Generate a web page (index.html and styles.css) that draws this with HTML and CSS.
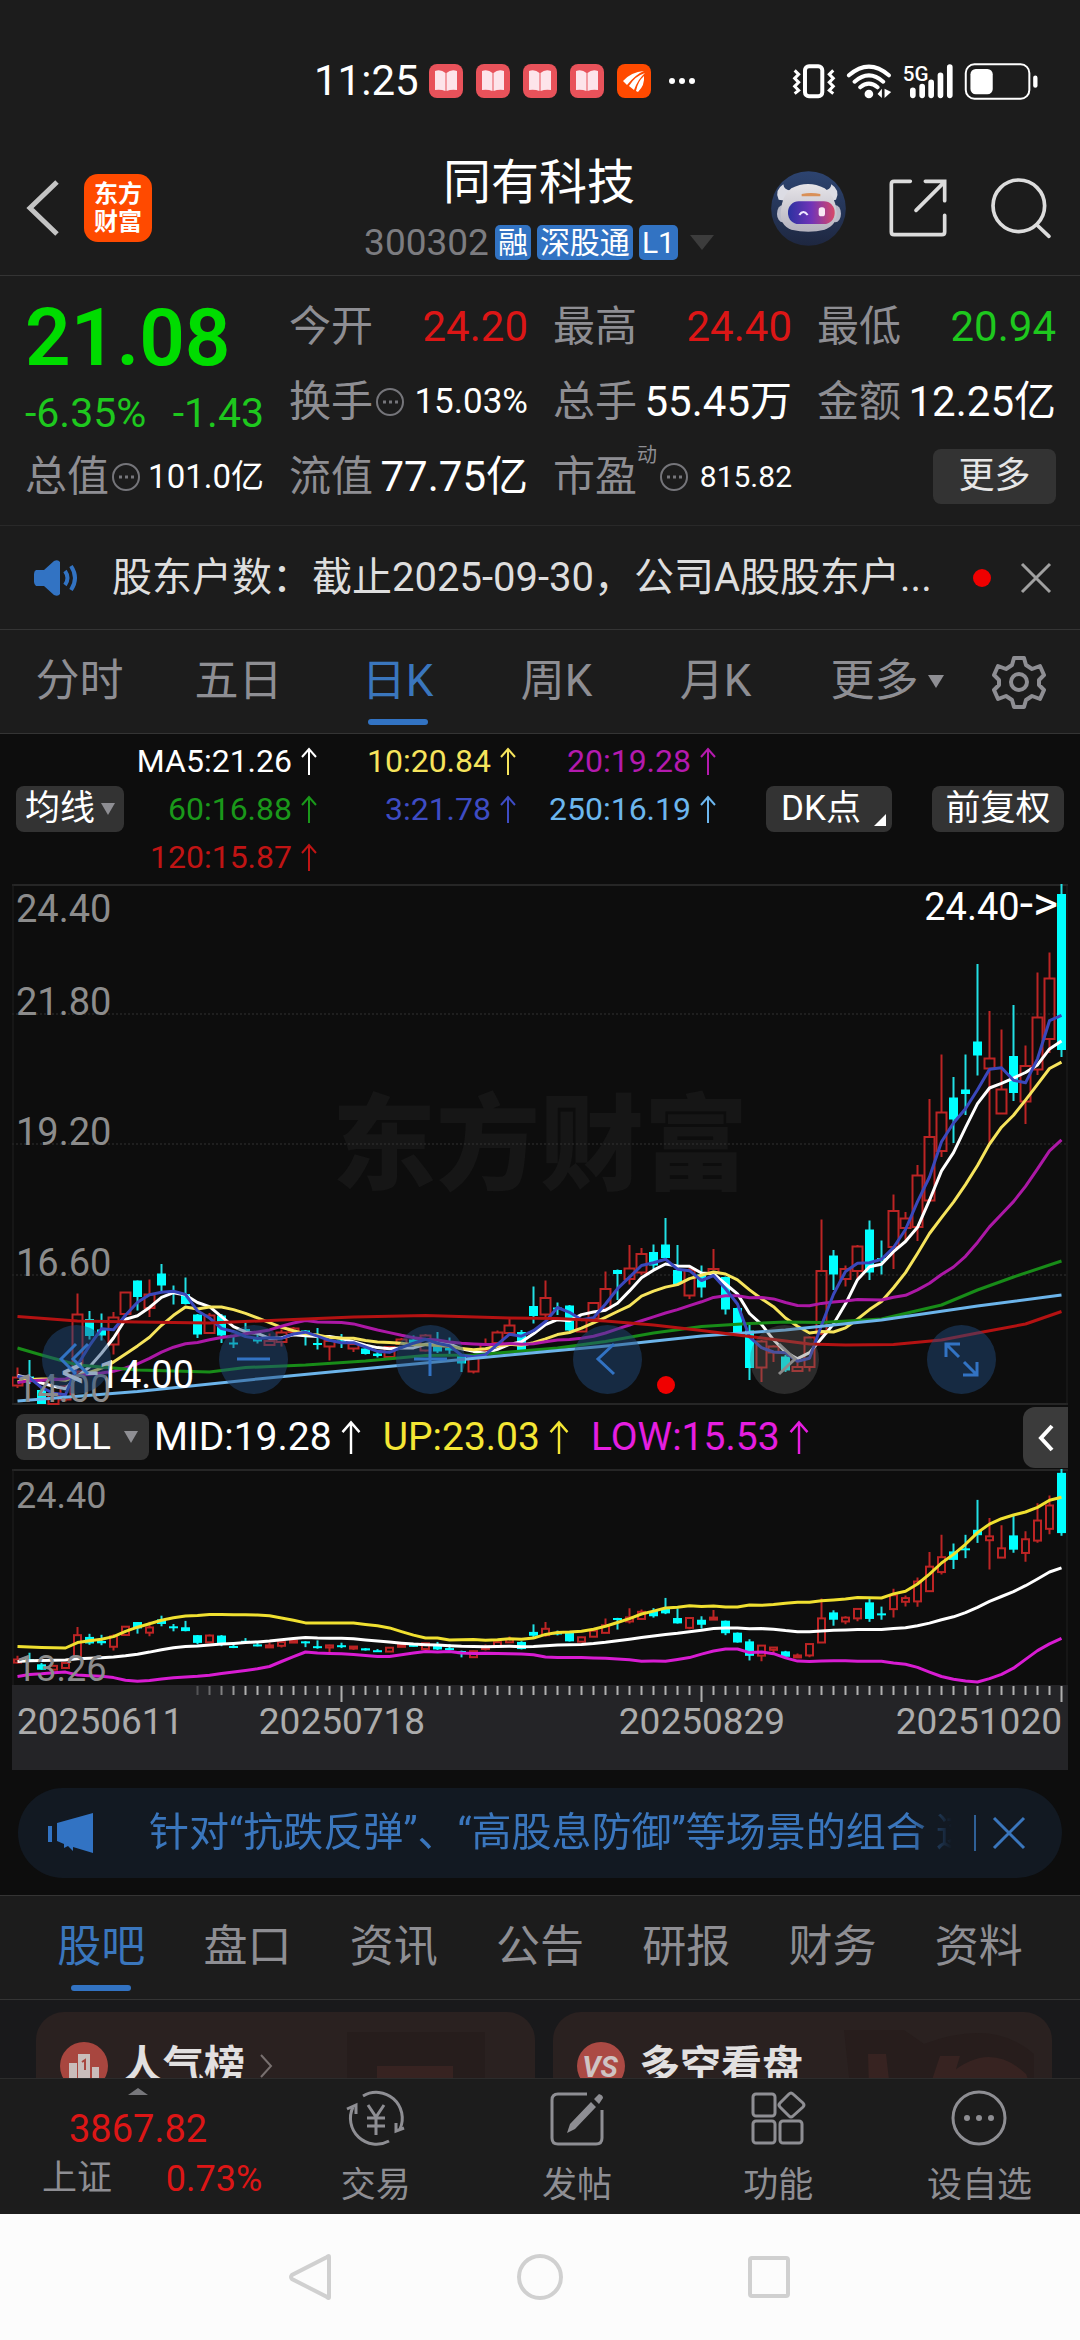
FILE: index.html
```html
<!DOCTYPE html>
<html lang="zh-CN">
<head>
<meta charset="utf-8">
<meta name="viewport" content="width=device-width, initial-scale=1">
<title>同有科技 300302</title>
<link rel="stylesheet" href="styles.css">
</head>
<body>
<svg class="symbols" aria-hidden="true">
  <symbol id="arrow" viewBox="0 0 16 28"><path d="M8 28V2M1 10l7-8 7 8" fill="none" stroke="currentColor" stroke-width="2"/></symbol>
  <symbol id="book" viewBox="0 0 34 34"><rect width="34" height="34" rx="8" fill="#e8525a"/><path d="M6 7q6-2 10.500 2v18q-5-2-10.500-1zM28 7q-6-2-10.500 2v18q5-2 10.500-1z" fill="#fde4ea"/></symbol>
</svg>
<div class="app">
  <div class="status">
    <span class="status-time">11:25</span>
    <svg class="status-app"><use href="#book"/></svg>
    <svg class="status-app"><use href="#book"/></svg>
    <svg class="status-app"><use href="#book"/></svg>
    <svg class="status-app"><use href="#book"/></svg>
    <svg class="status-app" viewBox="0 0 34 34"><rect width="34" height="34" rx="8" fill="#ff4a00"/><path d="M6 17Q14 8 27 7q-8 3-17 14zM12 22Q18 12 28 9q-7 6-11 17zM19 27q2-10 8-15 1 9-6 16z" fill="#fff"/></svg>
    <svg class="status-dots" viewBox="0 0 28 8"><circle cx="4" cy="4" r="3" fill="#fff"/><circle cx="14" cy="4" r="3" fill="#fff"/><circle cx="24" cy="4" r="3" fill="#fff"/></svg>
    <svg class="status-system" viewBox="210 30 745 120" fill="none" stroke="#fff">
      <rect x="249" y="46" width="52" height="90" rx="12" stroke-width="12"/>
      <path d="M218 58l12 12-12 12 12 12-12 12 12 12-12 10M334 58l-12 12 12 12-12 12 12 12-12 12 12 10" stroke-width="9"/>
      <path d="M381 73q60-52 120 0M398 92q43-38 86 0M415 109q26-22 52 0" stroke-width="12" stroke-linecap="round"/>
      <circle cx="441" cy="129" r="13" fill="#fff" stroke="none"/>
      <path d="M480 113v28l-13-12zM488 113v28l20-18z" fill="#fff" stroke="none"/>
      <text x="543" y="89" font-size="62" font-weight="500" fill="#fff" stroke="none">5G</text>
      <path d="M573 118v15M601 107v26M628 94v39M656 73v60M684 48v85" stroke-width="17" stroke-linecap="round"/>
      <rect x="732" y="40" width="191" height="103" rx="26" stroke-width="6"/>
      <rect x="746" y="54" width="67" height="76" rx="16" fill="#fff" stroke="none"/>
      <path d="M941 80v24" stroke-width="13" stroke-linecap="round"/>
    </svg>
  </div>

  <header class="header">
    <div class="header-left">
      <button class="plain" aria-label="返回"><svg width="34" height="56" viewBox="0 0 34 56"><path d="M31 2L4 28l27 26" fill="none" stroke="#c4c4c4" stroke-width="5"/></svg></button>
      <a class="brand" href="#">东方<br>财富</a>
    </div>
    <div class="header-title">
      <h1>同有科技</h1>
      <div class="code-row"><span class="code">300302</span><span class="badge">融</span><span class="badge">深股通</span><span class="badge">L1</span><svg width="24" height="15" viewBox="0 0 24 15"><path d="M0 0h24L12 15z" fill="#3c3c3c"/></svg></div>
    </div>
    <div class="header-right">
      <button class="plain" aria-label="智能助手"><svg width="75" height="75" viewBox="153 362 225 225">
        <defs>
          <linearGradient id="sky" x2="0" y2="1"><stop stop-color="#2d4470"/><stop offset="1" stop-color="#1e2740"/></linearGradient>
          <linearGradient id="visor"><stop stop-color="#2b32a0"/><stop offset=".5" stop-color="#7034b8"/><stop offset="1" stop-color="#d84868"/></linearGradient>
          <linearGradient id="shell" x2="0" y2="1"><stop stop-color="#e6e4e8"/><stop offset="1" stop-color="#b4b2be"/></linearGradient>
        </defs>
        <circle cx="265.500" cy="474.500" r="112" fill="url(#sky)"/>
        <path d="M190 402q-28 18-14 46l26 4 16-32q-26 2-28-18zM334 402q28 18 14 46l-26 4-16-32q26 2 28-18z" fill="#dcdce4"/>
        <ellipse cx="188" cy="490" rx="17" ry="26" fill="#b9bac8"/><ellipse cx="346" cy="490" rx="17" ry="26" fill="#b9bac8"/>
        <path d="M214 414q50-26 100 0q32 20 36 72q2 38-36 52q-48 12-100 0q-34-12-32-52q4-52 32-72z" fill="url(#shell)"/>
        <path d="M245 431q28-6 56 0v7h-56z" fill="#d99058"/>
        <rect x="204" y="453" width="140" height="68" rx="32" fill="url(#visor)"/>
        <path d="M238 494q12-18 25 0" fill="none" stroke="#f0e8ff" stroke-width="6"/><rect x="296" y="471" width="19" height="27" rx="8" fill="#f8e8f4"/>
      </svg></button>
      <button class="plain" aria-label="分享"><svg width="60" height="60" viewBox="500 385 180 180" fill="none" stroke="#dcdcdc" stroke-width="11" stroke-linecap="round"><path d="M567 395h-49q-8 0-8 8v144q0 8 8 8h144q8 0 8-8v-50M612 395h58v58M668 398l-84 84"/></svg></button>
      <button class="plain" aria-label="搜索"><svg width="62" height="62" viewBox="810 380 185 185" fill="none" stroke="#dcdcdc" stroke-width="11" stroke-linecap="round"><circle cx="896" cy="466" r="77"/><path d="M951 524l35 33"/></svg></button>
    </div>
  </header>

  <main class="main">
    <section class="quote">
      <div class="price"><strong>21.08</strong><div class="change"><span>-6.35%</span><span>-1.43</span></div></div>
      <div class="cell"><span class="label">今开</span><span class="value up">24.20</span></div>
      <div class="cell"><span class="label">最高</span><span class="value up">24.40</span></div>
      <div class="cell"><span class="label">最低</span><span class="value down">20.94</span></div>
      <div class="cell"><span class="label">换手</span><svg class="info" viewBox="0 0 30 30"><circle cx="15" cy="15" r="13"/><path d="M8 15h3M14 15h3M20 15h3"/></svg><span class="value mid">15.03%</span></div>
      <div class="cell"><span class="label">总手</span><span class="value">55.45万</span></div>
      <div class="cell"><span class="label">金额</span><span class="value">12.25亿</span></div>
      <div class="cell"><span class="label">总值</span><svg class="info" viewBox="0 0 30 30"><circle cx="15" cy="15" r="13"/><path d="M8 15h3M14 15h3M20 15h3"/></svg><span class="value small">101.0亿</span></div>
      <div class="cell"><span class="label">流值</span><span class="value">77.75亿</span></div>
      <div class="cell"><span class="label">市盈<sup>动</sup></span><svg class="info" viewBox="0 0 30 30"><circle cx="15" cy="15" r="13"/><path d="M8 15h3M14 15h3M20 15h3"/></svg><span class="value tiny">815.82</span></div>
      <div class="cell"><button class="more">更多</button></div>
    </section>

    <section class="notice">
      <svg width="46" height="36" viewBox="0 0 46 36"><path d="M2 10h8L20 1q4-2 6 1v32q-2 3-6 1l-10-9H2q-2-2-2-4v-8q0-3 2-4z" fill="#3273c3"/><path d="M31 11q5 7 0 14M37 6q8 12 0 24" fill="none" stroke="#3273c3" stroke-width="4"/></svg>
      <a class="notice-text" href="#">股东户数：截止2025-09-30，公司A股股东户...</a>
      <i class="dot"></i>
      <button class="plain" aria-label="关闭"><svg width="32" height="32" viewBox="0 0 32 32"><path d="M2 2l28 28M30 2L2 30" stroke="#a0a0a0" stroke-width="3"/></svg></button>
    </section>

    <nav class="tabs periods">
      <button>分时</button><button>五日</button><button class="active">日K</button><button>周K</button><button>月K</button>
      <button class="tab-more">更多<svg width="16" height="13" viewBox="0 0 16 13"><path d="M0 0h16L8 13z" fill="#8e8e93"/></svg></button>
      <button class="tab-gear" aria-label="设置"><svg width="54" height="54" viewBox="0 0 54 54" fill="none" stroke="#8e8e93" stroke-width="4" stroke-linejoin="round"><path d="M22 3h10l2 7 6 4 8-3 4 9-5 5v5l5 5-4 9-8-3-6 4-2 7H22l-2-7-6-4-8 3-4-9 5-5v-5l-5-5 4-9 8 3 6-4z"/><circle cx="27" cy="27" r="8"/></svg></button>
    </nav>

    <section class="chart-area">
      <div class="ma-bar">
        <button class="chip">均线<svg width="14" height="12" viewBox="0 0 14 12"><path d="M0 0h14L7 12z" fill="#8e8e93"/></svg></button>
        <div class="ma-grid">
          <span class="c-white">MA5:21.26<svg class="rise"><use href="#arrow"/></svg></span><span class="c-yellow">10:20.84<svg class="rise"><use href="#arrow"/></svg></span><span class="c-purple">20:19.28<svg class="rise"><use href="#arrow"/></svg></span>
          <span class="c-green">60:16.88<svg class="rise"><use href="#arrow"/></svg></span><span class="c-blue">3:21.78<svg class="rise"><use href="#arrow"/></svg></span><span class="c-sky">250:16.19<svg class="rise"><use href="#arrow"/></svg></span>
          <span class="c-red">120:15.87<svg class="rise"><use href="#arrow"/></svg></span>
        </div>
        <button class="chip chip-dk">DK点<svg width="12" height="12" viewBox="0 0 12 12"><path d="M12 0v12H0z" fill="#fff"/></svg></button>
        <button class="chip chip-adjust">前复权</button>
      </div>

      <div class="kline">
        <svg id="kline" viewBox="0 0 1056 521"></svg>
        <div class="tools">
          <button aria-label="更早"><svg viewBox="0 0 69 69"><path d="M34 19L19 34l15 15M46 19L31 34l15 15"/></svg></button>
          <button aria-label="缩小"><svg viewBox="0 0 69 69"><path d="M18 34h33"/></svg></button>
          <button aria-label="放大"><svg viewBox="0 0 69 69"><path d="M18 34h33M34 18v33"/></svg></button>
          <button aria-label="左移"><svg viewBox="0 0 69 69"><path d="M41 19L25 34l16 15"/></svg></button>
          <button class="off" aria-label="右移"><svg viewBox="0 0 69 69"><path d="M29 19l16 15-16 15"/></svg></button>
          <button aria-label="全屏"><svg viewBox="0 0 69 69"><path d="M19 32V19h14M20 20l12 12M50 37v13H36M49 49L37 37"/></svg></button>
        </div>
        <i class="dot kline-dot"></i>
      </div>

      <div class="boll-bar">
        <button class="chip chip-boll">BOLL<svg width="14" height="12" viewBox="0 0 14 12"><path d="M0 0h14L7 12z" fill="#8e8e93"/></svg></button>
        <span class="c-white">MID:19.28<svg class="rise"><use href="#arrow"/></svg></span><span class="c-up">UP:23.03<svg class="rise"><use href="#arrow"/></svg></span><span class="c-low">LOW:15.53<svg class="rise"><use href="#arrow"/></svg></span>
        <button class="drawer" aria-label="展开"><svg width="18" height="28" viewBox="0 0 18 28"><path d="M15 2L4 14l11 12" fill="none" stroke="#fff" stroke-width="4"/></svg></button>
      </div>
      <svg id="boll" viewBox="0 0 1056 216"></svg>
      <svg id="axis" viewBox="0 0 1056 85"></svg>

      <div class="banner">
        <svg width="46" height="40" viewBox="0 0 46 40"><path d="M0 13h4v16H0zM9 10L45 0v40l-20-6v4l-5-5-4 2v-4l-7-3z" fill="#3273c3"/></svg>
        <a class="banner-text" href="#">针对“抗跌反弹”、“高股息防御”等场景的组合 这</a>
        <i class="banner-line"></i>
        <button class="plain" aria-label="关闭"><svg width="34" height="34" viewBox="0 0 34 34"><path d="M2 2l30 30M32 2L2 32" stroke="#3a76bd" stroke-width="3"/></svg></button>
      </div>
    </section>

    <nav class="tabs sections">
      <button class="active">股吧</button><button>盘口</button><button>资讯</button><button>公告</button><button>研报</button><button>财务</button><button>资料</button>
    </nav>

    <section class="cards">
      <a class="card" href="#">
        <svg class="card-art" viewBox="0 0 200 110"><path d="M20 20h138v90H20z" fill="#261d1c"/><path d="M50 54h76v56H50z" fill="#372321"/></svg>
        <svg width="48" height="48" viewBox="0 0 48 48"><circle cx="24" cy="24" r="24" fill="#a8463f"/><path d="M9 21h8v20H9zM18 12h12v29H18zM32 25h7v16h-7z" fill="#c9bdbb"/><path d="M22 20l3-2v10" stroke="#a8463f" stroke-width="2" fill="none"/></svg>
        <h2>人气榜</h2>
        <svg width="14" height="24" viewBox="0 0 14 24"><path d="M2 1l10 11L2 23" fill="none" stroke="#78706f" stroke-width="2"/></svg>
      </a>
      <a class="card" href="#">
        <svg class="card-art" viewBox="0 0 200 110"><path d="M0 18h60l20 14q70-26 110 10v68H10z" fill="#271d1c"/><path d="M24 42h18l8 68H26zM74 110l22-66h20l-20 66zM106 62q40-34 76 0l4 10q-14 26-28 6-24-8-36 32h-20z" fill="#372321"/></svg>
        <svg width="48" height="48" viewBox="0 0 48 48"><circle cx="24" cy="24" r="24" fill="#ab4a44"/><text x="23" y="35" text-anchor="middle" font-size="29" font-weight="700" font-style="italic" fill="#cfc4c3">VS</text></svg>
        <h2>多空看盘</h2>
      </a>
    </section>
  </main>

  <footer class="bottom">
    <a class="index" href="#">
      <svg width="20" height="7" viewBox="0 0 20 7"><path d="M0 7L10 0l10 7z" fill="#77777b"/></svg>
      <span class="index-value">3867.82</span>
      <span class="index-row"><span>上证</span><span class="index-pct">0.73%</span></span>
    </a>
    <button class="action"><svg viewBox="0 0 56 56"><path d="M15 6a26 26 0 0 1 37 33M41 51A26 26 0 0 1 5 17"/><path d="M-1 19l9-4v9M56 38l-8 3v-8M20 15l8 12 8-12M28 27v18M19 28h18M19 36h18"/></svg>交易</button>
    <button class="action"><svg viewBox="0 0 56 56"><path d="M38 4H9q-6 0-6 6v38q0 6 6 6h38q6 0 6-6V20"/><path d="M42 12l5 5-21 22-8 4 3-9zM45 9l5-5q4 1 4 4l-4 6z" fill="#8e8e93" stroke="none"/></svg>发帖</button>
    <button class="action"><svg viewBox="0 0 56 56"><rect x="3" y="4" width="22" height="22" rx="3"/><rect x="3" y="31" width="22" height="22" rx="3"/><rect x="30" y="31" width="22" height="22" rx="3"/><path d="M39 4q2-2 4 0l10 9q2 2 0 4l-10 9q-2 2-4 0l-9-9q-2-2 0-4z"/></svg>功能</button>
    <button class="action"><svg viewBox="0 0 56 56"><circle cx="28" cy="28" r="26"/><g fill="#8e8e93" stroke="none"><circle cx="16" cy="28" r="3"/><circle cx="28" cy="28" r="3"/><circle cx="40" cy="28" r="3"/></g></svg>设自选</button>
  </footer>

  <div class="system-nav">
    <button class="plain" aria-label="系统返回"><svg viewBox="0 0 48 48"><path d="M42 4v40q0 2-2 0L5 26q-2-2 0-4L40 4q2-2 2 0z"/></svg></button>
    <button class="plain" aria-label="主屏幕"><svg viewBox="0 0 48 48"><circle cx="24" cy="24" r="21"/></svg></button>
    <button class="plain" aria-label="最近任务"><svg viewBox="0 0 48 48"><rect x="5" y="5" width="38" height="38" rx="2"/></svg></button>
  </div>
</div>
<script src="chart.js"></script>
</body>
</html>
```
FILE: styles.css
```css
* { box-sizing: border-box; }
body {
  margin: 0;
  background: #1c1c1c;
  color: #fff;
  font-family: Roboto, "Noto Sans CJK SC", sans-serif;
}
button { border: 0; padding: 0; background: none; font: inherit; color: inherit; }
a { color: inherit; text-decoration: none; }
svg { display: block; flex: none; }
h1, h2 { margin: 0; }
.plain { display: block; flex: none; }
.symbols { position: absolute; width: 0; height: 0; }

.app { display: flex; flex-direction: column; height: 100vh; overflow: hidden; }

/* status bar */
.status { flex: none; display: flex; align-items: center; padding: 58px 40px 0 314px; line-height: 46px; }
.status-time { font-size: 42px; margin-right: 10px; }
.status-app { width: 34px; height: 34px; margin-right: 13px; }
.status-dots { width: 28px; height: 8px; margin-left: 4px; }
.status-system { width: 248px; height: 40px; margin-left: auto; }

/* header */
.header {
  flex: none;
  display: grid;
  grid-template-columns: 1fr auto 1fr;
  padding: 37px 28px 0 26px;
  border-bottom: 1px solid #343434;
}
.header-left, .header-right { display: flex; align-items: center; }
.header-left { gap: 24px; }
.header-right { justify-content: flex-end; gap: 42px; }
.brand {
  width: 68px; padding: 6px 0; border-radius: 14px; background: #ff4a00;
  text-align: center; font-size: 24px; line-height: 28px; font-weight: 700;
}
.header-title { padding: 12px 0 15px; text-align: center; }
.header-title h1 { font-size: 48px; line-height: 60px; font-weight: 400; }
.code-row { display: flex; align-items: center; justify-content: center; gap: 6px; margin-top: 12px; line-height: 35px; }
.code { font-size: 37px; color: #7c7c80; }
.badge { padding: 0 3px; border-radius: 5px; background: #3273c3; font-size: 30px; }
.code-row svg { margin-left: 6px; }

.main { flex: 1; min-height: 0; overflow: hidden; }

/* quote */
.quote {
  display: grid;
  grid-template-columns: repeat(4, 1fr);
  grid-auto-rows: 75px;
  column-gap: 25px;
  padding: 13px 24px 11px 25px;
  border-bottom: 1px solid #292929;
}
.price { grid-row: span 2; }
.price strong { display: block; font-size: 80px; line-height: 98px; font-weight: 600; color: #00dc00; }
.change { display: flex; justify-content: space-between; font-size: 41px; line-height: 52px; color: #1ec81e; }
.cell { display: flex; align-items: center; white-space: nowrap; line-height: 60px; }
.label { position: relative; font-size: 42px; color: #8e8e93; }
.label sup { position: absolute; left: 100%; top: -2px; font-size: 20px; line-height: 20px; }
.info { width: 30px; height: 30px; margin-left: 2px; fill: none; stroke: #75757a; stroke-width: 2; }
.label:has(sup) + .info { margin-left: 22px; }
.info path { stroke-width: 3; }
.value { margin-left: auto; font-size: 42px; }
.mid { font-size: 35px; }
.small { font-size: 33px; }
.tiny { font-size: 30px; }
.up { color: #dc1616; }
.down { color: #1ec81e; }
.more { margin-left: auto; width: 123px; border-radius: 8px; background: #333; color: #e6e6e6; font-size: 36px; line-height: 55px; }

/* notice */
.notice { display: flex; align-items: center; height: 104px; padding: 0 28px 0 34px; border-bottom: 1px solid #343434; }
.notice-text { flex: 1; min-width: 0; margin-left: 32px; overflow: hidden; white-space: nowrap; font-size: 40px; line-height: 60px; color: #dedede; }
.dot { flex: none; width: 18px; height: 18px; border-radius: 50%; background: #f00000; }
.notice .plain { margin-left: 29px; }

/* tabs */
.tabs { display: flex; border-bottom: 1px solid #343434; font-size: 44px; line-height: 103px; color: #8e8e93; }
.tabs button { position: relative; flex: 1; height: 103px; }
.tabs .active { color: #3a76bd; }
.tabs .active::after {
  content: ""; position: absolute; left: 50%; bottom: 8px; width: 60px; height: 6px;
  margin-left: -30px; border-radius: 3px; background: #3273c3;
}
.periods { padding-right: 22px; }
.periods button { flex: 159; }
.periods .tab-more { flex: 184; display: flex; align-items: center; justify-content: center; gap: 9px; }
.periods .tab-gear { flex: 79; display: flex; align-items: center; justify-content: center; }
.sections { padding: 0 28px; border-top: 1px solid #343434; }

/* chart */
.chart-area { background: #0d0d0d; padding-bottom: 17px; }
.ma-bar { display: flex; align-items: center; padding: 3px 16px; }
.chip {
  display: flex; align-items: center; height: 46px; padding: 0 9px; gap: 6px;
  border-radius: 8px; background: #333; font-size: 35px; line-height: 46px; white-space: nowrap;
}
.ma-grid { display: grid; grid-template-columns: 193px 199px 200px; font-size: 32px; line-height: 48px; }
.ma-grid span, .boll-bar span { display: flex; align-items: center; justify-content: flex-end; gap: 9px; }
.rise { width: 16px; height: 28px; }
.boll-bar .rise { width: 20px; height: 34px; }
.chip-dk { position: relative; margin-left: auto; width: 126px; padding: 0 15px; }
.chip-dk svg { position: absolute; right: 6px; bottom: 6px; }
.chip-adjust { margin-left: 40px; width: 132px; justify-content: center; }
.c-white { color: #fff; }
.c-yellow { color: #f6e45c; }
.c-purple { color: #b41aae; }
.c-green { color: #1a981a; }
.c-blue { color: #3e4cc4; }
.c-sky { color: #6cb6ee; }
.c-red { color: #c01414; }
.c-up { color: #f4e634; }
.c-low { color: #e61ee0; }

.kline { position: relative; margin: 0 12px; }
.kline > svg { width: 100%; height: auto; }
.tools { position: absolute; left: 30px; right: 72px; bottom: 11px; display: flex; justify-content: space-between; }
.tools button { width: 69px; height: 69px; border-radius: 50%; background: rgba(34, 76, 128, .47); }
.tools .off { background: rgba(100, 100, 100, .35); }
.tools svg { fill: none; stroke: #3273c3; stroke-width: 3; }
.tools .off svg { stroke: #8a8a8a; }
.kline-dot { position: absolute; left: 645px; bottom: 11px; }

.boll-bar { display: flex; align-items: center; gap: 22px; height: 64px; padding: 0 12px 0 16px; font-size: 39px; line-height: 46px; white-space: nowrap; }
.chip-boll { width: 133px; margin-right: -17px; gap: 13px; font-size: 36px; }
.drawer { display: flex; align-items: center; justify-content: center; align-self: stretch; width: 45px; margin: 2px 0 1px auto; border-radius: 12px 0 0 12px; background: #3b3b3b; }
#boll, #axis { width: calc(100% - 24px); height: auto; margin: 0 12px; }
#axis { background: #242427; }
#kline text { font-size: 38px; fill: #8c8c8c; }
#boll text { font-size: 36px; fill: #8c8c8c; }
#axis text { font-size: 37px; fill: #acacac; }
#kline .mark { fill: #fff; }
#kline .mark tspan { font-size: 48px; }
#kline .watermark { font-size: 104px; font-weight: 900; fill: #161616; }

/* banner */
.banner { display: flex; align-items: center; height: 90px; margin: 18px 18px 0; padding: 0 36px 0 30px; border-radius: 45px; background: #121922; }
.banner-text {
  flex: 1; min-width: 0; margin-left: 55px; overflow: hidden; white-space: nowrap;
  font-size: 40px; line-height: 60px; color: #3a76bd;
  -webkit-mask-image: linear-gradient(to left, transparent 8px, #000 50px);
  mask-image: linear-gradient(to left, transparent 8px, #000 50px);
}
.banner-line { width: 2px; height: 36px; margin: 0 16px 0 14px; background: #2f6097; }

/* cards */
.cards { display: grid; grid-template-columns: 1fr 1fr; gap: 18px; padding: 12px 28px 12px 36px; background: #19191b; }
.card { position: relative; display: flex; align-items: center; gap: 14px; height: 108px; padding: 0 24px; border-radius: 28px; background: #2a2120; overflow: hidden; }
.card h2 { position: relative; font-size: 41px; line-height: 60px; font-weight: 700; color: #e2e0e0; }
.card-art { position: absolute; right: 8px; top: 0; width: 200px; height: 110px; }

/* bottom bar */
.bottom { flex: none; display: grid; grid-template-columns: 275fr repeat(4, 201fr); height: 136px; border-top: 1px solid #2c2c2c; background: #1c1c1c; color: #8e8e93; font-size: 35px; }
.index { display: flex; flex-direction: column; padding: 9px 13px 0 42px; line-height: 48px; }
.index svg { margin-left: 86px; }
.index-value { margin: 10px 0 2px 27px; font-size: 38px; color: #dc1616; }
.index-row { display: flex; justify-content: space-between; }
.index-pct { font-size: 36px; color: #dc1616; }
.action { display: flex; flex-direction: column; align-items: center; gap: 16px; padding-top: 11px; line-height: 48px; }
.action svg { width: 56px; height: 56px; overflow: visible; fill: none; stroke: #8e8e93; stroke-width: 3; }

.system-nav { flex: none; display: flex; align-items: center; justify-content: center; gap: 181px; height: 126px; background: #fcfcfc; }
.system-nav svg { width: 48px; height: 48px; fill: none; stroke: #d0d0d0; stroke-width: 4; }
```
FILE: chart.js
```js
// Daily candles: direction (1 = up), high, body top, body bottom, low
const days = [
[1,14.73,14.53,14.37,14.32],[0,14.88,14.55,14.45,14.40],[0,14.35,14.28,14.00,14.00],[1,14.25,14.20,14.00,14.00],[1,14.38,14.35,14.09,14.05],
[1,16.21,15.79,14.65,14.55],[0,15.86,15.70,15.36,15.29],[0,15.81,15.49,15.37,15.27],[1,15.84,15.73,15.19,14.99],[1,16.23,16.23,15.80,15.75],
[0,16.47,16.47,16.14,15.87],[1,16.49,16.19,15.92,15.74],[0,16.80,16.61,16.37,16.25],[0,16.37,16.25,16.20,15.99],[0,16.53,16.20,16.00,15.99],
[0,15.80,15.79,15.39,15.32],[1,15.82,15.77,15.42,15.41],[0,15.80,15.77,15.37,15.22],[0,15.35,15.23,15.21,15.12],[0,15.64,15.50,15.47,15.42],
[0,15.42,15.31,15.25,15.21],[1,15.41,15.26,15.18,15.18],[1,15.49,15.43,15.24,15.15],[1,15.54,15.51,15.44,15.42],[0,15.48,15.47,15.37,15.17],
[0,15.52,15.22,15.19,15.09],[1,15.29,15.26,15.15,14.87],[0,15.40,15.27,15.22,15.12],[1,15.22,15.20,15.11,15.04],[0,15.12,15.11,15.00,14.99],
[0,15.07,15.01,14.96,14.93],[1,15.15,15.14,14.94,14.93],[1,15.32,15.29,15.20,15.19],[0,15.37,15.29,15.22,15.19],[1,15.40,15.37,15.07,15.05],
[0,15.44,15.25,15.05,15.02],[0,15.33,15.12,15.07,15.00],[0,14.99,14.97,14.81,14.64],[1,14.98,14.96,14.65,14.61],[1,15.31,15.19,15.07,15.00],
[1,15.47,15.43,15.22,15.19],[1,15.72,15.57,15.42,15.39],[0,15.48,15.44,15.07,15.05],[0,16.35,15.96,15.76,15.61],[1,16.47,16.12,15.79,15.71],
[0,16.03,15.93,15.91,15.78],[0,15.98,15.97,15.47,15.46],[1,15.71,15.68,15.45,15.44],[1,16.04,16.02,15.71,15.70],[1,16.65,16.30,15.91,15.90],
[0,16.69,16.68,16.60,16.08],[1,17.18,16.71,16.50,16.39],[1,17.12,17.00,16.63,16.58],[0,17.19,17.04,16.77,16.70],[0,17.72,17.19,16.92,16.88],
[0,17.18,16.68,16.40,16.39],[1,16.72,16.68,16.17,16.10],[0,16.77,16.59,16.33,16.13],[1,17.10,16.70,16.63,16.60],[0,16.55,16.54,15.89,15.79],
[0,15.93,15.92,15.41,15.40],[0,15.58,15.47,14.72,14.48],[1,15.28,15.25,14.73,14.44],[1,15.17,15.15,15.03,14.84],[0,14.98,14.95,14.67,14.64],
[1,14.84,14.74,14.66,14.64],[1,15.35,15.33,14.74,14.65],[1,17.69,16.66,15.41,15.38],[0,17.08,16.97,16.59,16.28],[1,16.77,16.70,16.50,16.35],
[1,17.18,17.15,16.66,16.51],[0,17.67,17.49,16.63,16.48],[0,17.27,16.92,16.90,16.59],[1,18.19,17.86,17.14,16.70],[1,17.84,17.71,17.52,17.28],
[1,18.78,18.57,17.54,17.26],[1,20.10,19.34,18.07,18.06],[1,20.99,19.83,19.06,18.94],[0,20.54,20.13,19.69,19.22],[0,20.99,20.29,20.20,19.78],
[0,22.80,21.25,20.97,20.57],[1,21.86,20.91,20.71,19.19],[1,21.49,20.29,19.81,19.80],[0,21.98,20.96,20.22,20.06],[1,21.17,20.76,20.05,19.60],
[1,22.63,21.73,20.69,20.58],[1,23.03,22.51,21.30,21.02],[0,24.40,24.20,21.08,20.94]
];
// Closes before the visible window, oldest first
const earlier = [13.77,13.8,13.9,14.1,14.5,14.8,14.9,15,14.9,14.48,14,13.9,14.2,14.6,14.9,14.7,14.5,14.52,14.6];
const closes = earlier.concat(days.map(d => d[0] ? d[2] : d[3]));

// Long averages as [day, price] samples
const ma60 = [[0,15.12],[2,14.98],[5,14.78],[10,14.68],[16,14.64],[19,14.73],[24,14.78],[29,14.86],[34,14.97],[38,14.98],[41,15.04],[45,15.12],[49,15.25],[53,15.42],[57,15.55],[61,15.61],[64,15.64],[67,15.63],[72,15.7],[77,15.98],[80,16.28],[83,16.54],[87,16.86]];
const ma120 = [[0,15.75],[5,15.66],[10,15.64],[16,15.62],[22,15.68],[28,15.74],[34,15.77],[41,15.72],[45,15.71],[49,15.66],[53,15.58],[57,15.47],[61,15.35],[66,15.2],[69,15.18],[73,15.19],[77,15.28],[80,15.42],[84,15.6],[87,15.85]];
const ma250 = [[0,14.06],[10,14.25],[20,14.5],[30,14.73],[41,14.98],[50,15.18],[57,15.36],[64,15.48],[72,15.68],[80,15.96],[87,16.18]];

const x = i => 5.5 + 12 * i;
const last = (i, n) => closes.slice(i + 20 - n, i + 20);
const mean = a => a.reduce((s, v) => s + v, 0) / a.length;
const average = n => days.map((d, i) => [i, mean(last(i, n))]);
const band = k => days.map((d, i) => {
  const a = last(i, 20), m = mean(a);
  return [i, m + k * Math.sqrt(mean(a.map(v => (v - m) ** 2)))];
});
const scale = (low, height) => p => (24.4 - p) / (24.4 - low) * height;
const line = (points, y, color) =>
  `<polyline points="${points.map(([i, p]) => x(i) + ',' + y(p).toFixed(1)).join(' ')}" fill="none" stroke="${color}" stroke-width="3" stroke-linejoin="round"/>`;
const rule = (y, dash) => `<path d="M0 ${y}H1056" stroke="#${dash ? '333' : '262626'}" stroke-width="${dash ? 1 : 2}"${dash ? ' stroke-dasharray="2 2"' : ''}/>`;

function candles(y, width) {
  return days.map(([up, high, top, bottom, low], i) => {
    const c = x(i), a = y(top), b = y(bottom), h = Math.max(b - a, 2);
    return up
      ? `<path d="M${c} ${y(high)}V${a}M${c} ${b}V${y(low)}" stroke="#bc2424" stroke-width="2"/><rect x="${c - width / 2}" y="${a}" width="${width}" height="${h}" fill="none" stroke="#bc2424" stroke-width="2"/>`
      : `<path d="M${c} ${y(high)}V${y(low)}" stroke="#22e0e4" stroke-width="2"/><rect x="${c - 4.5}" y="${a}" width="9" height="${h}" fill="#00ffff"/>`;
  }).join('');
}

const ky = scale(14, 520);
document.getElementById('kline').innerHTML =
  '<text class="watermark" x="528" y="298" text-anchor="middle">东方财富</text>' +
  [130, 260, 391].map(v => rule(v, true)).join('') + rule(1) + rule(520) +
  '<path d="M1 0V521M1055 0V521" stroke="#202020" stroke-width="1"/>' +
  candles(ky, 10) +
  line(average(5), ky, '#ffffff') + line(average(10), ky, '#f6e45c') + line(average(20), ky, '#ac18a6') +
  line(ma60, ky, '#188c18') + line(average(3), ky, '#3a48bc') + line(ma250, ky, '#6cb4ea') + line(ma120, ky, '#b41212') +
  [['24.40', 38], ['21.80', 131], ['19.20', 261], ['16.60', 392], ['14.00', 518]]
    .map(([t, y]) => `<text x="4" y="${y}">${t}</text>`).join('') +
  '<text class="mark" x="1046" y="36" text-anchor="end">24.40<tspan>-&gt;</tspan></text>' +
  '<text class="mark" x="182" y="504" text-anchor="end"><tspan>&lt;-</tspan>14.00</text>';

const by = scale(13.26, 215);
document.getElementById('boll').innerHTML =
  rule(1) + '<path d="M1 0V216M1055 0V216" stroke="#202020" stroke-width="1"/>' +
  candles(by, 7) +
  line(band(0), by, '#ffffff') + line(band(2), by, '#f0e030') + line(band(-2), by, '#d81cd2') +
  '<text x="4" y="39">24.40</text><text x="4" y="212">13.26</text>';

document.getElementById('axis').innerHTML =
  days.map((d, i) => i < 15 ? '' :
    `<path d="M${x(i)} 1V${i % 30 === 27 ? 17 : 10}" stroke="#b0b0b0" stroke-width="2" opacity="${Math.min(1, (i - 13) / 6)}"/>`).join('') +
  '<text x="5" y="49">20250611</text><text x="330" y="49" text-anchor="middle">20250718</text>' +
  '<text x="690" y="49" text-anchor="middle">20250829</text><text x="1050" y="49" text-anchor="end">20251020</text>';
```
